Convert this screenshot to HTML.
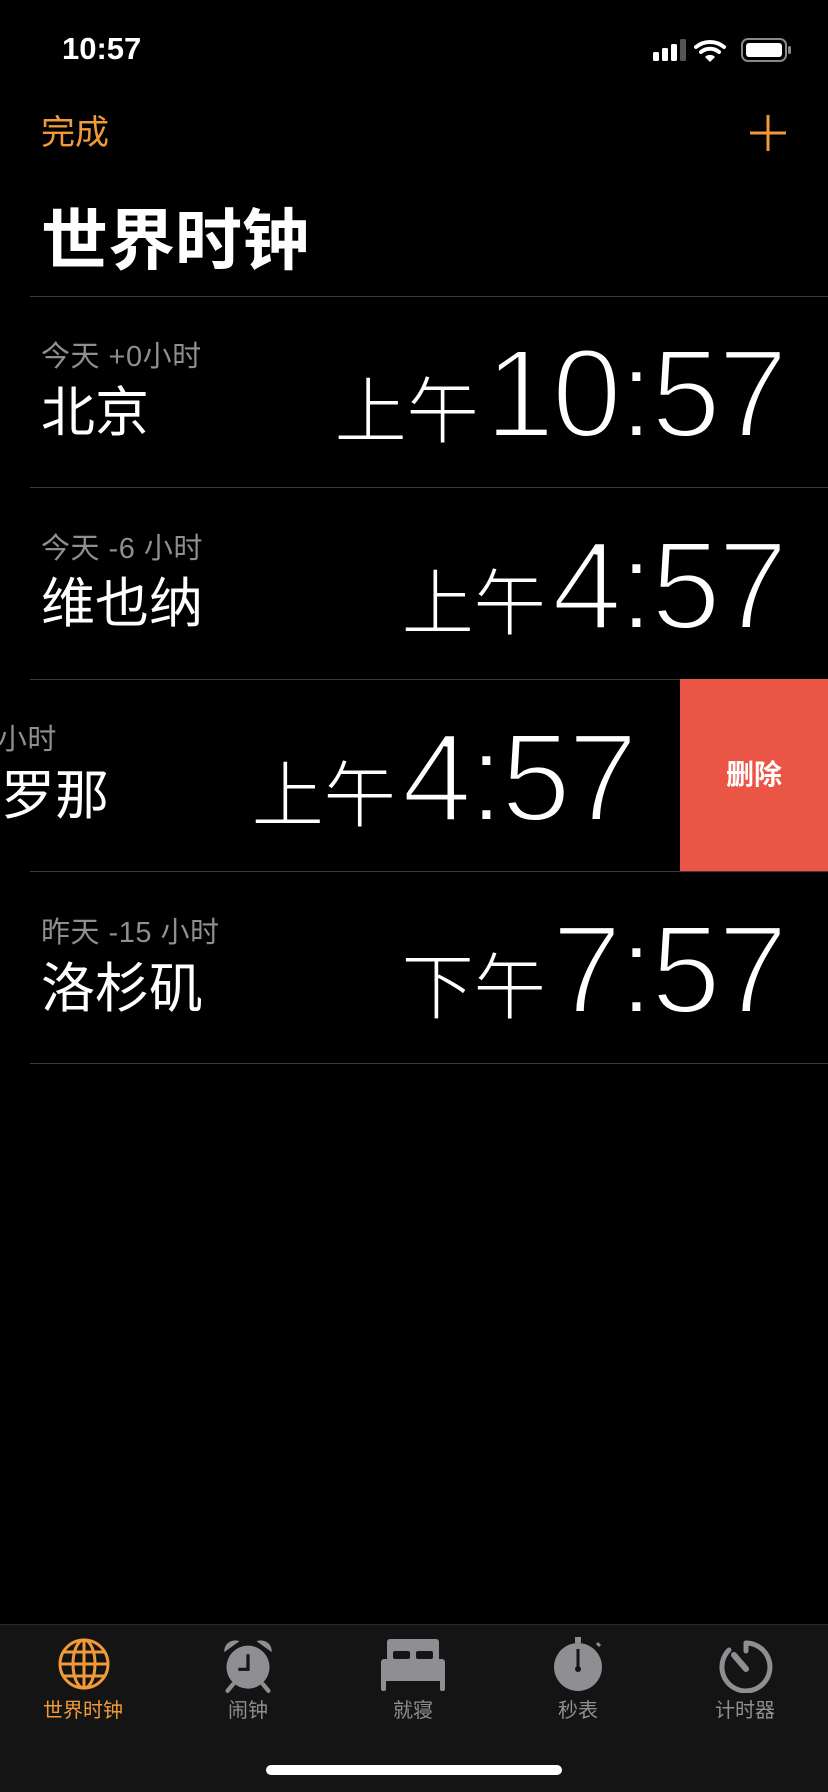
<!DOCTYPE html>
<html><head><meta charset="utf-8"><style>
*{margin:0;padding:0;box-sizing:border-box}
body{width:828px;height:1792px;background:#000;position:relative;overflow:hidden;font-family:"Liberation Sans","Noto Sans CJK SC",sans-serif;color:#fff}
.a{position:absolute;white-space:nowrap}
.sep{position:absolute;left:30px;right:0;height:1px;background:#3a3a3c}
.sub{font-size:29px;color:#8e8e93;line-height:1;letter-spacing:0.5px}
.city{font-size:54px;line-height:1}
.t{font-size:126px;line-height:1;letter-spacing:-3px;-webkit-text-stroke:4px #000;paint-order:normal}
.t span{font-size:72px;line-height:0;letter-spacing:0;margin-right:6px;font-family:"Noto Sans CJK SC",sans-serif;font-weight:300;-webkit-text-stroke:0}
.tab{position:absolute;top:1624px;left:0;width:828px;height:168px;background:#141414;border-top:1px solid #2a2a2a}
.ti{position:absolute;width:120px;text-align:center;font-size:20px;color:#8e8e93;top:69px}
</style></head><body>
<div class="a" style="left:62px;top:31px;font-size:31px;font-weight:bold">10:57</div>
<svg class="a" style="left:652px;top:36px" width="140" height="28" viewBox="0 0 140 28">
<rect x="1" y="16" width="6" height="9" rx="1.5" fill="#fff"/><rect x="10" y="12" width="6" height="13" rx="1.5" fill="#fff"/><rect x="19" y="8" width="6" height="17" rx="1.5" fill="#fff"/><rect x="28" y="3" width="6" height="22" rx="1.5" fill="#555"/>
<path d="M44 11a22 22 0 0 1 28 0" stroke="#fff" stroke-width="4" fill="none" stroke-linecap="round"/><path d="M49 16a14 14 0 0 1 18 0" stroke="#fff" stroke-width="4" fill="none" stroke-linecap="round"/><path d="M53 21l5 5 5-5a7 7 0 0 0-10 0z" fill="#fff"/>
<rect x="90" y="3" width="44" height="22" rx="6" stroke="#888" stroke-width="2" fill="none"/><rect x="94" y="7" width="36" height="14" rx="3" fill="#fff"/><rect x="136" y="10" width="3" height="8" rx="1.5" fill="#888"/>
</svg>
<div class="a" style="left:41px;top:116px;font-size:34px;color:#f19a37;line-height:1">完成</div>
<svg class="a" style="left:748px;top:113px" width="40" height="40"><path d="M20 2v36M2 20h36" stroke="#f19a37" stroke-width="3"/></svg>
<div class="a" style="left:41px;top:208px;font-size:67px;font-weight:bold;line-height:1">世界时钟</div>
<div class="sep" style="top:296px"></div>

<div class="a sub" style="left:41px;top:343px">今天 +0小时</div>
<div class="a city" style="left:41px;top:386px">北京</div>
<div class="a t" style="right:43px;top:331px"><span>上午</span>10:57</div>
<div class="sep" style="top:487px"></div>

<div class="a sub" style="left:41px;top:535px">今天 -6 小时</div>
<div class="a city" style="left:41px;top:577px">维也纳</div>
<div class="a t" style="right:43px;top:523px"><span>上午</span>4:57</div>
<div class="sep" style="top:679px"></div>

<div class="a sub" style="left:-105px;top:726px">今天 -6 小时</div>
<div class="a city" style="left:-53px;top:769px">维罗那</div>
<div class="a t" style="right:193px;top:715px"><span>上午</span>4:57</div>
<div class="a" style="left:680px;top:679px;width:148px;height:192px;background:#eb5545;font-size:28px;line-height:192px;text-align:center;font-weight:bold">删除</div>
<div class="sep" style="top:871px"></div>

<div class="a sub" style="left:41px;top:919px">昨天 -15 小时</div>
<div class="a city" style="left:41px;top:962px">洛杉矶</div>
<div class="a t" style="right:43px;top:907px"><span>下午</span>7:57</div>
<div class="sep" style="top:1063px"></div>

<div class="tab">
<svg class="a" style="left:58px;top:13px" width="52" height="52" viewBox="0 0 52 52" fill="none" stroke="#f19a37" stroke-width="3"><circle cx="26" cy="26" r="24"/><ellipse cx="26" cy="26" rx="11" ry="24"/><path d="M26 2v48M2 26h48M6 14h40M6 38h40"/></svg>
<svg class="a" style="left:220px;top:12px" width="56" height="56" viewBox="0 0 52 52"><circle cx="26" cy="28" r="20" fill="#8e8e93"/><path d="M4 14a10 10 0 0 1 14-10zM48 14a10 10 0 0 0-14-10z" fill="#8e8e93"/><path d="M12 44l-5 6M40 44l5 6" stroke="#8e8e93" stroke-width="4" stroke-linecap="round"/><path d="M26 16v14h-9" stroke="#141414" stroke-width="3" fill="none"/></svg>
<svg class="a" style="left:381px;top:14px" width="64" height="52" viewBox="0 0 64 52" fill="#8e8e93"><rect x="6" y="0" width="52" height="22" rx="3"/><rect x="0" y="20" width="64" height="22" rx="3"/><rect x="0" y="36" width="5" height="16" rx="2"/><rect x="59" y="36" width="5" height="16" rx="2"/><rect x="12" y="12" width="17" height="8" rx="2" fill="#141414"/><rect x="35" y="12" width="17" height="8" rx="2" fill="#141414"/></svg>
<svg class="a" style="left:552px;top:12px" width="52" height="56" viewBox="0 0 52 56"><circle cx="26" cy="30" r="24" fill="#8e8e93"/><rect x="23" y="0" width="6" height="6" fill="#8e8e93"/><path d="M45 6l3 3" stroke="#8e8e93" stroke-width="3"/><path d="M26 12v22" stroke="#141414" stroke-width="3"/><circle cx="26" cy="32" r="3" fill="#141414"/></svg>
<svg class="a" style="left:719px;top:12px" width="54" height="56" viewBox="0 0 54 56" fill="none"><path d="M27 6a24 24 0 1 1-17 7" stroke="#8e8e93" stroke-width="5" stroke-linecap="round"/><path d="M27 6v8" stroke="#8e8e93" stroke-width="5" stroke-linecap="round"/><path d="M15 18l12 14" stroke="#8e8e93" stroke-width="6" stroke-linecap="round"/></svg>
<div class="ti" style="left:23px;color:#f19a37">世界时钟</div>
<div class="ti" style="left:188px">闹钟</div>
<div class="ti" style="left:353px">就寝</div>
<div class="ti" style="left:518px">秒表</div>
<div class="ti" style="left:685px">计时器</div>
<div class="a" style="left:266px;top:140px;width:296px;height:10px;border-radius:5px;background:#fff"></div>
</div>
</body></html>
